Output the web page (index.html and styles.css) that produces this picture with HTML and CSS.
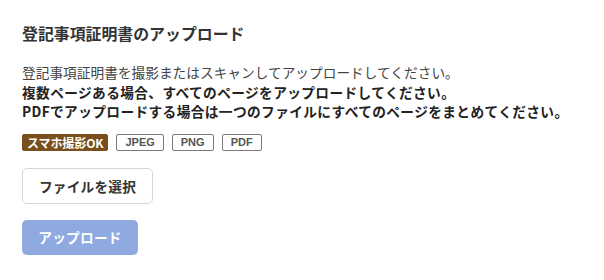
FILE: index.html
```html
<!DOCTYPE html>
<html lang="ja">
<head>
<meta charset="utf-8">
<link rel="stylesheet" href="styles.css">
</head>
<body>
<div class="panel">
  <h2 class="title">登記事項証明書のアップロード</h2>
  <div class="desc">
    <p class="line">登記事項証明書を撮影またはスキャンしてアップロードしてください。</p>
    <p class="line strong">複数ページある場合、すべてのページをアップロードしてください。</p>
    <p class="line strong">PDFでアップロードする場合は一つのファイルにすべてのページをまとめてください。</p>
  </div>
  <div class="tags">
    <span class="tag tag-main">スマホ撮影OK</span>
    <span class="tag">JPEG</span>
    <span class="tag">PNG</span>
    <span class="tag">PDF</span>
  </div>
  <div class="actions">
    <button class="btn btn-select" type="button">ファイルを選択</button>
    <button class="btn btn-upload" type="button" disabled>アップロード</button>
  </div>
</div>
</body>
</html>
```
FILE: styles.css
```css
html, body {
  margin: 0;
  padding: 0;
  background: #ffffff;
}
body {
  font-family: "Noto Sans CJK JP", "Noto Sans", sans-serif;
  color: #333333;
}
.panel {
  padding: 23px 22px;
  display: flex;
  flex-direction: column;
  align-items: flex-start;
}
.title {
  margin: 0;
  font-size: 15.9px;
  line-height: 22px;
  font-weight: 700;
  color: #333333;
}
.desc {
  margin-top: 18px;
}
.line {
  margin: 0;
  font-size: 13.7px;
  line-height: 19.5px;
  color: #444444;
  white-space: nowrap;
}
.line.strong {
  font-weight: 700;
  color: #222222;
  letter-spacing: 0.38px;
}
.tags {
  margin-top: 12px;
  display: flex;
  gap: 8px;
}
.tag {
  box-sizing: border-box;
  height: 17px;
  padding: 0 8px;
  border: 1px solid #7a7a7a;
  border-radius: 2px;
  font-family: "Liberation Sans", "Noto Sans CJK JP", sans-serif;
  font-size: 11px;
  font-weight: 700;
  line-height: 15px;
  color: #555555;
  display: flex;
  align-items: center;
}
.tag-main {
  background: #7b4f1d;
  border-color: #7b4f1d;
  color: #ffffff;
  padding: 0 4px;
  font-family: "Noto Sans CJK JP", sans-serif;
  font-size: 12px;
  letter-spacing: -0.1px;
}
.actions {
  margin-top: 17px;
  display: flex;
  flex-direction: column;
  align-items: flex-start;
  gap: 16px;
}
.btn {
  box-sizing: border-box;
  font-family: "Noto Sans CJK JP", sans-serif;
  font-size: 13.7px;
  font-weight: 700;
  border-radius: 5px;
  padding: 0;
  margin: 0;
  cursor: pointer;
}
.btn-select {
  width: 131px;
  height: 36px;
  background: #ffffff;
  border: 1px solid #d6d6d6;
  color: #333333;
  letter-spacing: 0.2px;
}
.btn-upload {
  width: 116px;
  height: 35px;
  background: #8eaae0;
  border: none;
  color: #ffffff;
  letter-spacing: 0.2px;
}
```
